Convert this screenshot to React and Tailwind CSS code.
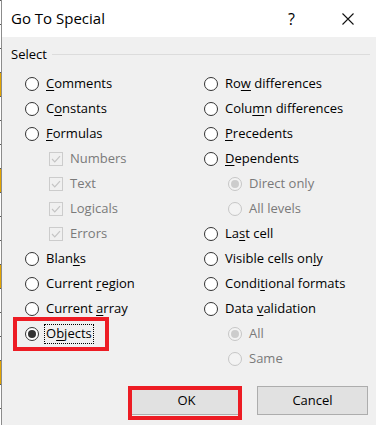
import React from 'react';

const FONT = '"Open Sans", "Noto Sans", Arial, sans-serif';

// excel sheet peeking out on the left: 24px rows, yellow every fourth
const SHEET_ROWS = Array.from({ length: 18 }, (_, i) => i);

function Label({ text, hotkey, disabled }) {
  if (hotkey === undefined || hotkey < 0) {
    return <span className={disabled ? 'text-[#7a7a7a]' : 'text-black'}>{text}</span>;
  }
  return (
    <span className={disabled ? 'text-[#7a7a7a]' : 'text-black'}>
      {text.slice(0, hotkey)}
      <u className="underline underline-offset-[2px] decoration-1">{text[hotkey]}</u>
      {text.slice(hotkey + 1)}
    </span>
  );
}

function Radio({ checked = false, disabled = false }) {
  return (
    <span
      className={`flex h-[14px] w-[14px] shrink-0 items-center justify-center rounded-full border ${
        disabled ? 'border-[#c6c6c6] bg-[#f3f3f3]' : 'border-[#333333] bg-white'
      }`}
    >
      {checked && (
        <span className={`h-[8px] w-[8px] rounded-full ${disabled ? 'bg-[#cccccc]' : 'bg-[#333333]'}`} />
      )}
    </span>
  );
}

function Check() {
  return (
    <span className="flex h-[14px] w-[14px] shrink-0 items-center justify-center border border-[#cccccc] bg-[#f0f0f0]">
      <svg width="10" height="8" viewBox="0 0 10 8">
        <path d="M1 4 L3.8 6.8 L9 1.2" fill="none" stroke="#c4c4c4" strokeWidth="1.2" />
      </svg>
    </span>
  );
}

function Row({ kind = 'radio', text, hotkey, checked, disabled, indent = false, children }) {
  return (
    <div className={`relative flex h-[25px] items-center gap-[7px] ${indent ? 'pl-[24px]' : ''}`}>
      {kind === 'check' ? <Check /> : <Radio checked={checked} disabled={disabled} />}
      {children || <Label text={text} hotkey={hotkey} disabled={disabled} />}
    </div>
  );
}

export default function App() {
  return (
    <div
      className="flex h-[425px] w-[376px] overflow-hidden bg-[#f0f0f0] text-[13px] leading-none"
      style={{ fontFamily: FONT }}
    >
      <div className="flex w-[1px] shrink-0 flex-col pt-[21px]">
        <div className="-mt-[21px] h-[21px] bg-[#e2a400]" />
        {SHEET_ROWS.map((i) => (
          <div
            key={i}
            className={`h-[24px] shrink-0 border-t border-[#5a5a5a] ${i % 4 === 3 ? 'bg-[#e2a400]' : 'bg-white'}`}
          />
        ))}
      </div>

      <div className="flex flex-1 flex-col border-l border-[#8c8c8c]">
        <div className="flex h-[37px] shrink-0 items-center bg-white pl-[9px] pr-[22px]">
          <span className="text-[15px] text-black">Go To Special</span>
          <span className="ml-auto text-[16px] text-black">?</span>
          <svg className="ml-[47px]" width="12" height="12" viewBox="0 0 12 12">
            <path d="M0.5 0.5 L11.5 11.5 M11.5 0.5 L0.5 11.5" stroke="#111" strokeWidth="1.1" />
          </svg>
        </div>

        <div className="flex flex-1 flex-col pt-[9px]">
          <div className="flex h-[17px] items-center pl-[9px] pr-[6px]">
            <span className="text-black">Select</span>
            <div className="ml-[5px] h-px flex-1 bg-[#dcdcdc]" />
          </div>

          <div className="mt-[8px] grid grid-cols-[179px_1fr] pl-[23px]">
            <div className="flex flex-col">
              <Row text="Comments" hotkey={0} />
              <Row text="Constants" hotkey={1} />
              <Row text="Formulas" hotkey={0} />
              <Row kind="check" text="Numbers" disabled indent />
              <Row kind="check" text="Text" disabled indent />
              <Row kind="check" text="Logicals" disabled indent />
              <Row kind="check" text="Errors" disabled indent />
              <Row text="Blanks" hotkey={4} />
              <Row text="Current region" hotkey={8} />
              <Row text="Current array" hotkey={8} />
              <Row checked>
                <span className="-ml-[2px] flex h-[20px] items-center border border-dotted border-black px-[1px]">
                  <Label text="Objects" hotkey={1} />
                </span>
                <div className="pointer-events-none absolute left-[-12px] top-[-4px] h-[34px] w-[96px] border-4 border-[#ed1c24]" />
              </Row>
            </div>

            <div className="flex flex-col">
              <Row text="Row differences" hotkey={2} />
              <Row text="Column differences" hotkey={4} />
              <Row text="Precedents" hotkey={0} />
              <Row text="Dependents" hotkey={0} />
              <Row text="Direct only" checked disabled indent />
              <Row text="All levels" disabled indent />
              <Row text="Last cell" hotkey={2} />
              <Row text="Visible cells only" hotkey={16} />
              <Row text="Conditional formats" hotkey={5} />
              <Row text="Data validation" hotkey={5} />
              <Row text="All" checked disabled indent />
              <Row text="Same" disabled indent />
            </div>
          </div>

          <div className="mt-[15px] flex justify-end gap-[15px] pr-[8px]">
            <div className="relative">
              <button className="h-[29px] w-[111px] border border-[#adadad] bg-[#e1e1e1] text-black">OK</button>
              <div className="pointer-events-none absolute left-[-3px] top-0 h-[34px] w-[114px] border-4 border-[#ed1c24]" />
            </div>
            <button className="h-[29px] w-[111px] border border-[#adadad] bg-[#e1e1e1] text-black">Cancel</button>
          </div>
        </div>
      </div>
    </div>
  );
}
